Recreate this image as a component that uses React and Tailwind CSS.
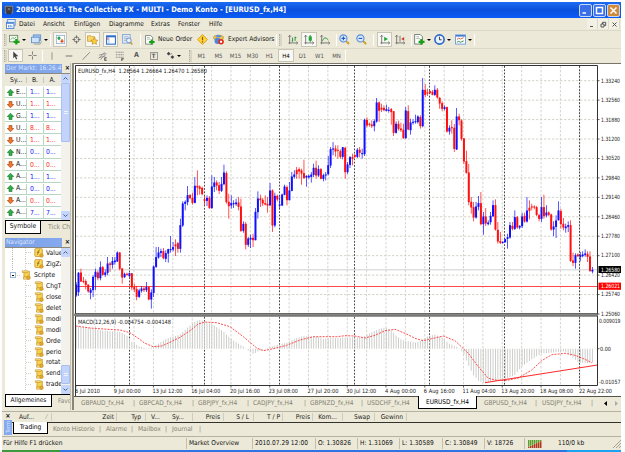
import React from "react";

/* ---------- price data: [high, low, open, close] in thirds of a pixel, y down ---------- */
const CANDLES = [
  [660,705,700,668],[630,702,690,633],[620,660,632,658],[645,664,657,659],[652,682,658,668],[668,692,668,688],[678,712,692,684],[640,705,684,645],
  [620,684,645,630],[625,655,632,648],[598,655,648,616],[612,642,616,638],[622,645,638,632],[585,640,632,605],[600,630,605,608],[585,620,608,598],
  [585,608,600,596],[568,600,598,572],[570,625,572,620],[618,665,620,646],[632,648,645,636],[632,642,636,638],[632,645,642,634],[634,685,634,676],
  [665,690,676,682],[672,715,682,704],[680,708,704,686],[672,692,686,680],[675,690,680,684],[660,690,684,676],[674,715,676,712],[682,740,712,692],
  [610,705,692,614],[555,618,614,586],[555,590,586,572],[560,585,572,568],[558,592,568,588],[565,600,590,574],[560,602,574,562],[522,572,564,562],
  [540,568,562,556],[532,582,548,552],[540,572,544,560],[470,572,560,490],[418,495,490,425],[415,445,425,420],[372,430,420,400],[396,412,400,408],
  [392,428,408,422],[345,424,422,372],[325,400,372,376],[370,398,374,380],[374,400,378,396],[402,430,412,416],[400,432,416,408],[402,440,408,438],
  [340,440,438,374],[345,390,374,362],[355,385,362,370],[360,396,370,386],[345,390,386,366],[308,370,366,332],[328,425,334,420],[395,470,420,432],
  [400,440,430,424],[415,438,426,424],[410,432,426,422],[405,445,422,434],[410,510,434,506],[478,512,506,486],[480,562,486,548],[525,555,548,530],
  [518,558,532,528],[515,555,528,534],[438,535,534,450],[388,470,450,410],[398,435,410,414],[408,432,414,424],[400,430,424,427],[405,452,426,430],
  [363,430,430,386],[382,510,386,490],[392,496,490,402],[398,418,402,412],[400,440,430,428],[395,432,430,398],[368,400,398,374],[370,430,376,414],
  [360,415,414,386],[330,388,386,344],[325,350,344,338],[315,350,324,336],[316,350,322,328],[320,368,326,334],[293,350,334,348],[340,374,346,342],
  [338,350,346,342],[330,362,344,338],[305,345,338,318],[296,350,318,340],[310,345,340,322],[318,352,322,350],[335,358,350,340],[330,355,340,338],
  [282,340,336,310],[255,318,310,262],[240,280,262,260],[250,284,260,268],[250,290,264,266],[262,290,268,284],[255,292,284,256],[254,350,258,330],
  [300,336,330,308],[282,318,308,286],[275,310,286,290],[276,288,280,284],[258,288,284,264],[255,286,264,272],[260,290,276,274],[170,282,276,174],
  [166,196,174,190],[182,194,186,188],[175,198,188,192],[172,208,192,178],[108,182,178,122],[118,180,122,146],[125,150,138,142],[130,148,138,144],
  [128,148,146,142],[135,152,145,144],[138,188,142,150],[148,222,148,212],[178,215,212,186],[176,206,186,200],[182,210,200,204],[185,230,204,228],
  [135,230,228,146],[130,205,148,202],[170,218,204,182],[172,188,182,180],[158,185,180,178],[160,185,180,164],[160,200,166,192],[48,196,192,84],
  [66,106,84,98],[80,102,92,94],[85,95,88,92],[84,100,90,98],[70,102,98,84],[78,110,84,106],[105,140,108,124],[118,148,124,140],
  [130,145,140,136],[134,212,136,208],[190,218,208,198],[175,215,196,198],[186,270,198,260],[138,264,262,164],[155,190,164,174],[172,236,176,230],
  [228,306,230,298],[266,335,298,332],[306,430,332,420],[405,455,420,436],[420,478,436,466],[420,470,466,434],[402,445,434,424],[390,490,424,486],
  [450,518,486,464],[438,492,464,484],[475,490,486,482],[450,488,480,462],[415,465,462,430],[412,506,430,502],[480,545,504,538],[510,546,538,542],
  [538,545,542,540],[530,542,540,532],[515,560,530,526],[480,530,526,490],[480,505,492,500],[445,504,500,466],[462,500,466,496],[490,502,496,492],
  [452,498,492,464],[452,482,462,478],[405,482,478,446],[415,472,438,446],[425,445,434,436],[430,442,434,436],[432,462,436,458],[455,478,460,470],
  [405,480,470,436],[398,470,436,462],[430,466,460,452],[448,462,452,458],[455,506,458,502],[478,522,502,494],[460,528,494,476],[418,476,474,446],
  [440,500,448,486],[468,505,486,496],[485,512,498,494],[478,510,494,490],[475,600,490,596],[572,612,596,602],[574,620,602,580],[574,585,578,582],
  [570,598,584,580],[568,586,582,578],[562,584,578,575],[568,600,576,584],[568,630,584,626],[615,634,628,624],
];

/* MACD curves, same unit */
const HIST = [[17,48],[60,54],[100,62],[150,66],[170,76],[185,95],[205,108],[230,115],[250,112],[270,98],[290,86],[310,80],[330,74],[350,55],[370,38],[385,30],[400,32],[430,45],[460,64],[480,84],[500,98],[520,110],[530,118],[550,132],[565,124],[580,118],[600,112],[620,105],[650,98],[680,84],[700,78],[740,80],[760,86],[800,84],[825,82],[875,82],[895,72],[920,60],[945,52],[965,62],[980,78],[995,90],[1015,94],[1040,98],[1055,90],[1075,78],[1095,74],[1120,84],[1135,100],[1155,108],[1170,116],[1180,130],[1195,165],[1210,195],[1225,212],[1245,220],[1265,215],[1305,208],[1335,195],[1355,170],[1385,148],[1415,130],[1445,128],[1485,124],[1505,140],[1525,156],[1545,160],[1570,158]];
const SIGNAL = [[17,48],[60,54],[100,57],[150,60],[180,68],[200,82],[225,100],[250,110],[275,108],[300,97],[330,82],[360,62],[385,42],[405,36],[440,38],[480,50],[520,80],[560,114],[580,122],[610,116],[650,106],[690,90],[730,80],[800,80],[825,77],[855,78],[885,84],[915,76],[945,62],[975,58],[1005,70],[1035,85],[1060,92],[1085,86],[1120,78],[1155,92],[1195,130],[1225,170],[1255,205],[1275,210],[1305,212],[1345,204],[1385,180],[1415,152],[1445,134],[1485,130],[1515,136],[1545,148],[1565,158]];

const heightAt = (x) => {
  for (let i = 1; i < HIST.length; i++) {
    if (x <= HIST[i][0]) {
      const [x0, y0] = HIST[i - 1];
      const [x1, y1] = HIST[i];
      return y0 + ((y1 - y0) * (x - x0)) / (x1 - x0);
    }
  }
  return 158;
};

const PRICES = ["1.33240","1.32560","1.31880","1.31200","1.30520","1.29840","1.29140","1.28460","1.27780","1.27100","1.26420","1.25740","1.25060"];
const DATES = ["6 Jul 2010","9 Jul 00:00","13 Jul 12:00","16 Jul 04:00","20 Jul 16:00","23 Jul 08:00","27 Jul 20:00","30 Jul 12:00","4 Aug 00:00","6 Aug 16:00","11 Aug 04:00","13 Aug 20:00","18 Aug 08:00","22 Aug 22:00"];
const DATE_W = [25, 27, 30, 29, 30, 29, 31, 30, 31, 31, 33, 33, 33, 33];

function Chart() {
  const grid = Array.from({ length: 26 }, (_, i) => 95.3 + i * 19.38);
  const weeks = [129.5, 204.5, 279.5, 354.5, 429.5, 504.5, 579.5];
  return (
    <svg viewBox="74 64 547 332" className="block h-[332px] w-[547px]" fontFamily="'DejaVu Sans Condensed','DejaVu Sans',sans-serif" fontSize="5.8" fill="#1a1a1a">
      <rect x="74" y="64" width="547" height="332" fill="#fff" />
      <g stroke="#cfcfc4" strokeWidth="0.9" strokeDasharray="2.4 1.6">
        {PRICES.map((p, i) => <path key={p} d={`M76 ${80.7 + i * 19.44}H597`} />)}
        {grid.map((x) => <path key={x} d={`M${x} 66V385`} />)}
      </g>
      <path d="M76 269.8H597" stroke="#c4c4c4" strokeWidth="0.8" />
      {weeks.map((x) => <path key={x} d={`M${x} 66V385`} stroke="#333" strokeWidth="0.9" strokeDasharray="1.8 1.5" />)}
      <path d="M76 286.5H598" stroke="#ff4848" strokeWidth="1" />
      {CANDLES.map(([h, l, o, c], i) => {
        const x = 76.1 + i * 2.424;
        const color = c < o ? "#1010ff" : "#ff1010";
        return (
          <g key={i} fill={color}>
            <rect x={x - 0.35} y={62 + h / 3} width="0.7" height={(l - h) / 3} />
            <rect x={x - 1} y={62 + Math.min(o, c) / 3 - 0.2} width="2" height={Math.max(1, Math.abs(c - o) / 3 + 0.4)} />
          </g>
        );
      })}
      <g fill="#c8c8c6">
        {CANDLES.map((_, i) => {
          const x = 76.1 + i * 2.424;
          const y = 310 + heightAt((x - 70) * 3) / 3;
          return <rect key={i} x={x - 0.45} y={Math.min(y, 348.7)} width="0.9" height={Math.max(0.4, Math.abs(348.7 - y))} />;
        })}
      </g>
      <path d={"M" + SIGNAL.map(([x, y]) => `${(70 + x / 3).toFixed(1)} ${(310 + y / 3).toFixed(1)}`).join("L")} fill="none" stroke="#ff3a3a" strokeWidth="0.9" strokeDasharray="2 1.2" />
      <path d="M485 382.7L597.5 365" stroke="#ff2828" strokeWidth="1" />
      {/* frames */}
      <path d="M75.5 396V65.5H597.5V385.5H75.5" fill="none" stroke="#333" strokeWidth="1" />
      <rect x="74" y="313.6" width="524" height="2.4" fill="#8a8a86" />
      <path d="M75 313.6H597.5M75 316.2H597.5" stroke="#444" strokeWidth="0.8" />
      <text x="78" y="73.3" textLength="129" lengthAdjust="spacingAndGlyphs">EURUSD_fx,H4&#160; 1.26564 1.26664 1.26470 1.26580</text>
      <text x="78" y="324.2" textLength="93" lengthAdjust="spacingAndGlyphs">MACD(12,26,9) -0.004754 -0.004148</text>
      {PRICES.map((p, i) => (
        <g key={p}>
          <path d={`M597 ${80.7 + i * 19.44}h2.5`} stroke="#333" strokeWidth="0.8" />
          <text x="601" y={82.7 + i * 19.4} textLength="19" lengthAdjust="spacingAndGlyphs">{p}</text>
        </g>
      ))}
      <path d="M597 348.7h2.5" stroke="#333" strokeWidth="0.8" />
      <text x="599" y="322.8" textLength="21.5" lengthAdjust="spacingAndGlyphs">0.009019</text>
      <text x="600" y="350.8" textLength="11" lengthAdjust="spacingAndGlyphs">0.00</text>
      <text x="599" y="383.8" textLength="21.5" lengthAdjust="spacingAndGlyphs">-0.01057</text>
      <rect x="598.5" y="266" width="22.5" height="7" fill="#000" />
      <text x="601" y="271.7" fill="#fff" textLength="19" lengthAdjust="spacingAndGlyphs">1.26580</text>
      <rect x="598.5" y="282.6" width="22.5" height="7.2" fill="#ff0000" />
      <text x="601" y="288.4" fill="#fff" textLength="19" lengthAdjust="spacingAndGlyphs">1.26021</text>
      {DATES.map((d, i) => (
        <g key={d}>
          <path d={`M${75.9 + i * 38.76} 385v2.5`} stroke="#333" strokeWidth="0.8" />
          <text x={75 + i * 38.76} y="393.3" textLength={DATE_W[i]} lengthAdjust="spacingAndGlyphs">{d}</text>
        </g>
      ))}
    </svg>
  );
}

/* ---------- icons ---------- */
const ICONS = {
  app: <><rect x="1" y="1" width="10" height="9" rx="1" fill="#8b8a86" /><path d="M2 2h8v6l-2 3H4L2 8z" fill="#3c3c40" /><path d="M4.500 3.500l3 3M7.500 3.500l-3 3" stroke="#999" strokeWidth="0.800" /></>,
  charts: <><rect x="2" y="0.500" width="9" height="7" fill="#e8f1ff" stroke="#4b86d8" /><rect x="0.500" y="4" width="9" height="7.500" fill="#fff" stroke="#3b78d0" /><path d="M1 5h8" stroke="#3b78d0" strokeWidth="1.400" /><path d="M3 10V7.500M5 10V7M7 10V8" stroke="#3b78d0" /></>,
  newChart: <><rect x="0.500" y="1.500" width="9" height="7" fill="#f4f8ee" stroke="#6f8f6f" /><path d="M2 6l2-2 2 1 2-2" fill="none" stroke="#6aa96a" /><path d="M8 5.500v6M5 8.500h6.500" stroke="#18a018" strokeWidth="2.400" /></>,
  profiles: <><rect x="2.500" y="1" width="8" height="6" fill="#9cc4f4" stroke="#6a94cc" /><rect x="0.500" y="3.500" width="8.500" height="6" fill="#cfe2fb" stroke="#6a94cc" /><path d="M3 11h7l1.500-3" fill="none" stroke="#9a9a8a" /></>,
  market: <><rect x="0.500" y="0.500" width="11" height="11" fill="#fff" stroke="#8cacd4" /><path d="M4 1.500l3 3.200h-6z M3 4.500h2v2H3z" fill="#1a9a3a" /><path d="M8 10.700L5 7.500h6z M7 5.500h2v2H7z" fill="#e04a20" /></>,
  cross: <><circle cx="6" cy="6" r="3.500" fill="none" stroke="#555" /><path d="M6 0.500v4M6 7.500v4M0.500 6h4M7.500 6h4" stroke="#555" /></>,
  folder: <><path d="M0.500 2h4l1 1h3v5h-8z" fill="#f9d768" stroke="#c8962a" strokeWidth="0.800" /><path d="M8 4l1.200 2.500 2.600.3-2 1.800.6 2.700L8 10l-2.400 1.300.6-2.700-2-1.800 2.600-.3z" fill="#ffd23a" stroke="#b8841a" strokeWidth="0.700" /></>,
  terminal: <><rect x="0.700" y="1" width="10.600" height="10" fill="#fff" stroke="#2f6fc8" strokeWidth="1.300" /><path d="M1 2h10" stroke="#2f6fc8" strokeWidth="1.600" /><path d="M3.500 3v8" stroke="#8fb2e4" /><path d="M2.200 3v3" stroke="#e05030" /></>,
  tester: <><rect x="0.500" y="0.500" width="8.500" height="9.500" fill="#dfe9f6" stroke="#8cacd4" /><path d="M2 3h5M2 5h5M2 7h5" stroke="#8aa6cc" strokeWidth="0.700" /><circle cx="7.500" cy="7" r="2.600" fill="#e7f3ff" stroke="#6a8cbe" /><path d="M9.300 9l2 2.500" stroke="#c89a3a" strokeWidth="1.600" /></>,
  order: <><path d="M0.700 0.500h6l2.500 2.500v8H0.700z" fill="#fff" stroke="#6a7a6a" /><path d="M2.500 3h3M2.500 5h4" stroke="#888" strokeWidth="0.700" /><path d="M8 5.500v6M5 8.500h6.500" stroke="#18a018" strokeWidth="2.400" /></>,
  diamond: <><path d="M6 0.500L11.500 6 6 11.500 0.500 6z" fill="#ffd23a" stroke="#d8a01e" /><path d="M6 3v3.800M6 8v1.300" stroke="#8a5a08" strokeWidth="1.300" /></>,
  expert: <><ellipse cx="6" cy="4" rx="5.500" ry="2.600" fill="#f2c648" stroke="#b8841a" strokeWidth="0.700" /><circle cx="5" cy="7.500" r="3.300" fill="#4b86d8" /><path d="M3 3.500C3 0 8.500 0 9 3.500z" fill="#5b93e0" /><circle cx="8.800" cy="8.500" r="3" fill="#e02a18" /><rect x="7.700" y="7.400" width="2.200" height="2.200" fill="#fff" /></>,
  bars: <><path d="M2 0.500v10.500M0.500 9.500h11M0.500 2l1.500-1.700L3.500 2M10 8l1.700 1.500L10 11" fill="none" stroke="#666" /><path d="M5.500 3v5M4.500 7h1M8.500 2v5M8.500 3h1.500" stroke="#188a28" strokeWidth="1.100" /></>,
  candle: <><path d="M2 0.500v10.500M0.500 9.500h11M0.500 2l1.500-1.700L3.500 2M10 8l1.700 1.500L10 11" fill="none" stroke="#666" /><path d="M7.500 0v8.500" stroke="#188a28" /><rect x="5.600" y="1.500" width="3.800" height="5.500" rx="0.800" fill="#1ea83a" /></>,
  line: <><path d="M2 0.500v10.500M0.500 9.500h11M0.500 2l1.500-1.700L3.500 2M10 8l1.700 1.500L10 11" fill="none" stroke="#666" /><path d="M3 7c2-5 4-4 7-1" fill="none" stroke="#188a28" strokeWidth="1.100" /></>,
  zoomIn: <><path d="M7.500 7.500l3.500 3.500" stroke="#d0a02a" strokeWidth="2.200" /><circle cx="4.800" cy="4.800" r="3.900" fill="#d8eaff" stroke="#5a8cd8" strokeWidth="1.200" /><path d="M2.800 4.800h4M4.800 2.800v4" stroke="#2458b8" strokeWidth="1.200" /></>,
  zoomOut: <><path d="M7.500 7.500l3.500 3.500" stroke="#d0a02a" strokeWidth="2.200" /><circle cx="4.800" cy="4.800" r="3.900" fill="#d8eaff" stroke="#5a8cd8" strokeWidth="1.200" /><path d="M2.800 4.800h4" stroke="#2458b8" strokeWidth="1.200" /></>,
  scroll: <><path d="M2 0.500v10.500M0.500 9.500h11M0.500 2l1.500-1.700L3.500 2M10 8l1.700 1.500L10 11" fill="none" stroke="#666" /><path d="M5 2l4.500 2.700L5 7.500z" fill="#1ea83a" /></>,
  shift: <><path d="M2 0.500v10.500M0.500 9.500h11M0.500 2l1.500-1.700L3.500 2M10 8l1.700 1.500L10 11M6 1v7" fill="none" stroke="#666" /><path d="M11 2.500L7.500 4.700 11 7z" fill="#c83a28" /></>,
  clock: <><circle cx="6" cy="6" r="5" fill="#e9f3ff" stroke="#2f68c8" strokeWidth="1.800" /><path d="M6 3v3.300h2.300" fill="none" stroke="#333" /></>,
  template: <><rect x="0.600" y="1" width="10.800" height="10" fill="#fff" stroke="#6a9ae0" /><path d="M1 2h10" stroke="#3b78d0" strokeWidth="1.700" /><path d="M2 6l2-1.500 2 1 3.500-1.500" fill="none" stroke="#d05a3a" /><path d="M2 9l2-1 2 1 3.500-1.500" fill="none" stroke="#2f8a3f" /></>,
  cursor: <path d="M3 0.500v9l2.200-2 1.500 3.700 1.600-.7-1.500-3.500h3z" fill="#444" />,
  plus: <path d="M6 0.500v4.500M6 7v4.500M0.500 6H5M7 6h4.500" stroke="#666" />,
  vline: <path d="M6 1.500v9" stroke="#888" />,
  hline: <path d="M2 6h8" stroke="#777" strokeWidth="1.200" />,
  slope: <path d="M2 10.500L10.500 1.500" stroke="#777" />,
  channel: <><path d="M1 9L8 1.500M3 10.500l7-8M1 5l8-2M1 8l8-2" stroke="#777" strokeWidth="0.800" /><path d="M8 8v3.500h2.500M8 9.700h2M8 8h2.500" fill="none" stroke="#333" strokeWidth="0.800" /></>,
  fibo: <><path d="M1 1.500h9.500M1 4.500h9.500M1 7.500h9.500" stroke="#777" strokeDasharray="1.400 .6" /><path d="M8 9v3M8 9h2.500M8 10.500h2" stroke="#333" strokeWidth="0.800" /></>,
  arrows: <><path d="M1 3.500L3.500 1 6 3.500 3.500 6z M6 8L8.500 5.500 11 8 8.500 10.500z" fill="#444" /><path d="M6 5l2-2" stroke="#666" /></>,
  page: <><path d="M3.500 1.500h6.500v7H3.500z" fill="#f8d24a" stroke="#c8962e" strokeWidth="0.900" /><path d="M1.500 1h6c1.500 0 1.500 2 0 2h-6zM3 8.500h6c1.500 0 1.500 2.500 0 2.500H3z" fill="#fbe38a" stroke="#c8962e" strokeWidth="0.800" /><circle cx="9" cy="9.300" r="2.200" fill="#e5a92a" stroke="#b8861e" strokeWidth="0.600" /></>,
  indicator: <><rect x="1" y="0.800" width="9" height="9.500" rx="1" fill="#fbd75a" stroke="#c8962e" /><path d="M7 2.500C4.500 2 5.500 7 3.500 8.500M3.500 5h3" fill="none" stroke="#8a6210" /><circle cx="9" cy="9" r="2.200" fill="#e5a92a" stroke="#b8861e" strokeWidth="0.600" /></>,
};

function Icon({ name, s = 11 }) {
  return <svg viewBox="0 0 12 12" width={s} height={s} fill="none" className="shrink-0">{ICONS[name]}</svg>;
}

/* A row of fixed-width slots: [width, content, extra classes] */
function Slots({ items }) {
  return items.map(([w, content, cls = ""], i) => (
    <div key={i} className={`flex shrink-0 items-center whitespace-nowrap ${cls}`} style={{ width: w }}>{content}</div>
  ));
}

const Caret = () => <div className="ml-0.5 h-0 w-0 border-x-[2px] border-t-[2px] border-x-transparent border-t-black" />;
const Sep = () => <div className="h-3 w-px border-r border-white bg-[#b5b2a2]" />;
const Grip = () => <div className="h-3 w-[3px] border-l border-dotted border-[#b3b0a0] bg-[#d9d6c7]" />;
const PRESSED = "h-[15px] justify-center border border-[#c9c6b6] bg-[#f8f7f2]";
const C = "justify-center";

function Scrollbar({ thumb }) {
  return (
    <div className="flex w-[9px] shrink-0 flex-col bg-[#f3f2ec]">
      <div className="flex h-[9px] items-center justify-center rounded-[1px] bg-[#c6d5fb]"><svg width="5" height="3" viewBox="0 0 5 3"><path d="M.5 2.500l2-2 2 2" fill="none" stroke="#4d6185" /></svg></div>
      {thumb}
      <div className="flex h-[9px] items-center justify-center rounded-[1px] bg-[#c6d5fb]"><svg width="5" height="3" viewBox="0 0 5 3"><path d="M.5 .5l2 2 2-2" fill="none" stroke="#4d6185" /></svg></div>
    </div>
  );
}

const SYMBOLS = [["E...", "1...", 1], ["U...", "1...", 0], ["G...", "1...", 1], ["U...", "8...", 0], ["U...", "1...", 0], ["N...", "0...", 1], ["A...", "0...", 0], ["A...", "1...", 1], ["A...", "0...", 1], ["A...", "0...", 0], ["A...", "7...", 1]];

function Arrow({ up }) {
  return (
    <svg width="7" height="7" viewBox="0 0 8 8" className={up ? "shrink-0" : "shrink-0 rotate-180"}>
      <path d="M4 .3L7.700 4H5.700v3.500H2.300V4H.3z" fill={up ? "#2fae4a" : "#f07a2a"} stroke={up ? "#13702a" : "#a03a10"} strokeWidth="0.700" />
    </svg>
  );
}

function PanelTitle({ children }) {
  return (
    <div className="flex h-[10px] shrink-0 items-center">
      <div className="h-[9px] w-[57px] overflow-hidden bg-gradient-to-r from-[#7ba0e8] to-[#84a9ee] pl-px text-[6.5px] leading-[9px] whitespace-nowrap text-[#d9e5fb]">{children}</div>
      <div className="ml-[3px] text-[7px] leading-none font-bold">×</div>
    </div>
  );
}

function MarketWatch() {
  return (
    <div className="flex h-[171px] flex-col">
      <PanelTitle>Der Markt: 16:26:4</PanelTitle>
      <div className="flex h-[147px] overflow-hidden border-t border-[#8d8a7c] bg-white">
        <div className="w-[56px] text-[6.8px]">
          <div className="flex h-[12px] items-center bg-[#ebe9dc] text-[#222]">
            <div className="w-[22px] border-r border-[#c9c6b6] pl-[5px]">Sy...</div>
            <div className="w-[17px] border-r border-[#c9c6b6] text-center">B.</div>
            <div className="w-[17px] text-center">A.</div>
          </div>
          {SYMBOLS.map(([n, v, up], i) => (
            <div key={i} className="flex h-[12.1px] border-b border-[#b9d8c4] pt-px leading-[11px]">
              <div className="flex w-[22px] items-center border-r border-[#b9d8c4] pl-[2px]"><Arrow up={up} /><span className="ml-[2px]">{n}</span></div>
              <div className={`w-[17px] border-r border-[#b9d8c4] pl-[3px] ${up ? "text-[#2020ff]" : "text-[#ff3020]"}`}>{v}</div>
              <div className={`w-[17px] pl-[2px] ${up ? "text-[#2020ff]" : "text-[#ff3020]"}`}>{v}</div>
            </div>
          ))}
        </div>
        <Scrollbar thumb={<div className="flex-1"><div className="flex h-[59px] flex-col items-center justify-center gap-px rounded-[1px] border border-[#a9bff0] bg-[#c3d3fb]"><div className="h-px w-1 bg-[#eef3ff]" /><div className="h-px w-1 bg-[#eef3ff]" /></div></div>} />
      </div>
      <div className="flex h-[14px] items-start overflow-hidden whitespace-nowrap border-t border-black text-[6.8px]">
        <div className="h-[13px] w-[36px] border-x border-b border-black bg-white text-center leading-[11px]">Symbole</div>
        <div className="h-[13px] flex-1 overflow-hidden pl-[7px] leading-[12px] text-[#8b8879]">Tick Cha</div>
      </div>
    </div>
  );
}

const TREE = [["indicator", "Value"], ["indicator", "ZigZa"], null, ["page", "ChgT"], ["page", "close"], ["page", "delet"], ["page", "modi"], ["page", "modi"], ["page", "Orde"], ["page", "perio"], ["page", "rotat"], ["page", "send"], ["page", "trade"]];

function Navigator() {
  return (
    <div className="mt-[3px] flex h-[171px] flex-col">
      <PanelTitle>Navigator</PanelTitle>
      <div className="flex h-[147px] border-t border-[#8d8a7c] bg-white">
        <div className="w-[56px] overflow-hidden text-[6.7px] leading-none whitespace-nowrap">
          {TREE.map((t, i) =>
            t ? (
              <div key={i} className="flex h-[10.950px] items-center">
                <div className={`ml-[7px] h-full w-[13px] shrink-0 ${i < 2 ? "border-l border-dotted border-[#b5b5a8]" : ""}`} />
                <div className="mr-[3px] h-full w-[6px] shrink-0 border-l border-dotted border-[#d0d0c4]"><div className="h-1/2 border-b border-dotted border-[#d0d0c4]" /></div>
                <Icon name={t[0]} s={10} />
                <span className="ml-[2px]">{t[1]}</span>
              </div>
            ) : (
              <div key={i} className="flex h-[10.950px] items-center">
                <div className="ml-[5px] flex size-[6px] shrink-0 items-center justify-center border border-[#9fb5d4] bg-white"><div className="h-px w-[2px] bg-black" /></div>
                <div className="mr-px ml-px w-[3px] border-b border-dotted border-[#d0d0c4]" />
                <Icon name="page" s={10} />
                <span className="ml-[3px]">Scripte</span>
              </div>
            )
          )}
        </div>
        <Scrollbar thumb={<div className="flex flex-1 flex-col justify-end"><div className="mb-px flex h-[19px] flex-col items-center justify-center gap-px rounded-[1px] border border-[#a9bff0] bg-[#c3d3fb]"><div className="h-px w-1 bg-[#eef3ff]" /><div className="h-px w-1 bg-[#eef3ff]" /></div></div>} />
      </div>
      <div className="flex h-[14px] items-start overflow-hidden whitespace-nowrap border-t border-black text-[6.5px]">
        <div className="h-[12px] w-[47px] border-x border-b border-black bg-white text-center leading-[11px]">Allgemeines</div>
        <div className="h-[13px] flex-1 overflow-hidden pl-[6px] leading-[12px] text-[#8b8879]">Favor</div>
      </div>
    </div>
  );
}

const Btn = ({ children, red }) => (
  <div className={`flex size-[13px] items-center justify-center rounded-[2px] border border-[#c8d8fa] text-white ${red ? "bg-[#d08a3c]" : "bg-[#3a6fe6]"}`}>
    <svg width="9" height="9" viewBox="0 0 9 9" fill="none" stroke="#fff" strokeWidth="1.500">{children}</svg>
  </div>
);

export default function App() {
  return (
    <div className="flex h-[452px] w-[625px] flex-col overflow-hidden bg-white pt-[2px] pl-[2px] font-['DejaVu_Sans_Condensed','DejaVu_Sans',sans-serif] text-[6.6px] leading-none text-[#111]">
      <div className="flex h-[450px] w-[619px] flex-col bg-[#ece9d8]">
        {/* title bar */}
        <div className="flex h-4 shrink-0 items-center bg-gradient-to-b from-[#1c6cf2] via-[#0a50dc] to-[#0a5cf8] pl-[2px]">
          <Icon name="app" s={10} />
          <div className="ml-[2px] w-[271px] text-[7.5px] font-bold whitespace-nowrap text-white">2089001156: The Collective FX - MULTI - Demo Konto - [EURUSD_fx,H4]</div>
          <div className="mr-[1px] ml-auto flex gap-px">
            <Btn><path d="M1.500 7h3.500" /></Btn>
            <Btn><path d="M1.500 1.500h6v6h-6z" /></Btn>
            <Btn red><path d="M1.500 1.500l6 6M7.500 1.500l-6 6" /></Btn>
          </div>
        </div>
        {/* menu */}
        <div className="flex h-[13px] shrink-0 items-center border-b border-[#dcd9c8] text-[6.6px]">
          <Slots items={[[17, <Icon name="charts" s={10} />, "pl-[4px]"], [24, "Datei"], [31, "Ansicht"], [35, "Einfügen"], [42, "Diagramme"], [27, "Extras"], [31, "Fenster"], [30, "Hilfe"]]} />
          <div className="mr-px ml-auto flex">
            {["M1 5.500h3", "M1 3h3v3H1zM2.500 3V1.300h3.200V4.500H4.200", "M1.500 1.500l4 4M5.500 1.500l-4 4"].map((d) => (
              <div key={d} className="flex h-[10px] w-[11px] items-center justify-center border-r border-[#dcd9c8] bg-[#f3f1e6]"><svg width="7" height="7" viewBox="0 0 7 7" fill="none" stroke="#555"><path d={d} /></svg></div>
            ))}
          </div>
        </div>
        {/* main toolbar */}
        <div className="flex h-[17px] shrink-0 items-center">
          <Slots items={[
            [7, <Grip />, "pl-[2px]"], [22, <><Icon name="newChart" /><Caret /></>], [17, <><Icon name="profiles" /><Caret /></>], [5, <Sep />, "pl-[2px]"],
            [14, <Icon name="market" s={9} />, PRESSED], [18, <Icon name="cross" s={9} />, C], [15, <Icon name="folder" />, PRESSED], [3, null], [15, <Icon name="terminal" s={10} />, PRESSED], [19, <Icon name="tester" />, C],
            [8, <Sep />, "pl-[3px]"], [52, <><Icon name="order" s={10} /><span className="ml-[3px]">Neue Order</span></>], [16, <Icon name="diamond" />], [63, <><Icon name="expert" /><span className="ml-[4px]">Expert Advisors</span></>],
            [1, <Sep />], [8, <Grip />, "pl-[2px]"], [16, <Icon name="bars" s={10} />, C], [16, <Icon name="candle" s={10} />, PRESSED], [16, <Icon name="line" s={10} />, C], [6, <Sep />, "pl-[3px]"],
            [17, <Icon name="zoomIn" />], [17, <Icon name="zoomOut" />], [4, <Sep />], [15, <Icon name="scroll" s={10} />, PRESSED], [16, <Icon name="shift" s={10} />, C], [6, <Sep />, "pl-[3px]"],
            [20, <><Icon name="order" /><Caret /></>], [21, <><Icon name="clock" /><Caret /></>], [19, <><Icon name="template" /><Caret /></>], [3, <Sep />],
          ]} />
        </div>
        {/* drawing toolbar */}
        <div className="flex h-[14px] shrink-0 items-center border-t border-[#dcd9c8] text-[6px] text-[#555]">
          <Slots items={[
            [6, <Grip />, "pl-[2px]"], [15, <Icon name="cursor" s={9} />, "h-[13px] justify-center border border-[#c9c6b6] bg-[#f8f7f2]"], [19, <Icon name="plus" s={9} />, C], [1, <Sep />],
            ...["vline", "hline", "slope", "channel", "fibo"].map((n) => [17, <Icon name={n} s={10} />, C]),
            [17, <span className="text-[7px] font-bold">A</span>, C], [17, <span className="flex size-[8px] items-center justify-center border border-[#999] text-[6px] font-bold">T</span>, C], [22, <><Icon name="arrows" s={9} /><Caret /></>, C],
            [9, <Grip />, "pl-[5px]"],
            ...["M1", "M5", "M15", "M30", "H1"].map((t) => [17, t, C]),
            [16, "H4", "h-[13px] justify-center border border-[#c9c6b6] bg-[#f8f7f2] text-black"],
            ...["D1", "W1", "MN"].map((t) => [17, t, C]), [3, <Sep />],
          ]} />
        </div>
        {/* work area */}
        <div className="flex h-[348px] shrink-0 pt-px">
          <div className="mr-px w-[69px] shrink-0 border-r border-[#c4c1b1] pl-[3px]">
            <MarketWatch />
            <Navigator />
          </div>
          <div className="flex min-w-0 flex-1 flex-col border-l-2 border-[#8a877a]">
            <div className="h-px w-full shrink-0 bg-[#77756a]" />
            <div className="h-[332px] shrink-0 overflow-hidden"><Chart /></div>
            <div className="flex h-[13px] items-stretch border-t border-[#55534a] text-[6.5px] text-[#858274]">
              <Slots items={[[7, null], [58, "GBPAUD_fx,H4"], [59, "GBPCAD_fx,H4"], [55, "GBPJPY_fx,H4"], [57, "CADJPY_fx,H4"], [57, "GBPNZD_fx,H4"], [51, "USDCHF_fx,H4"]].map(([w, t]) => [w, t && <><span>{t}</span>{t[0] !== "U" && <span className="mr-[4px] ml-auto">|</span>}</>])} />
              <div className="-mt-px flex w-[59px] items-center justify-center border-x border-b border-black bg-white text-black">EURUSD_fx,H4</div>
              <Slots items={[[7, null], [58, "GBPUSD_fx,H4"], [56, "USDJPY_fx,H4"]].map(([w, t]) => [w, t && <><span>{t}</span><span className="mr-[5px] ml-auto">|</span></>])} />
              <div className="flex flex-1 items-center justify-end gap-[8px] pr-[3px]"><svg width="3" height="5"><path d="M3 0v5L0 2.500z" fill="#000" /></svg><svg width="3" height="5"><path d="M0 0v5l3-2.500z" fill="#aaa" /></svg></div>
            </div>
          </div>
        </div>
        {/* terminal */}
        <div className="mt-[1px] flex h-[24px] shrink-0 border-t border-[#b5b2a2]">
          <div className="ml-[2px] flex w-[8px] flex-col items-center">
            <div className="flex h-[8px] items-center text-[7px] font-bold">×</div>
            <div className="flex h-[15px] w-full items-center justify-center overflow-hidden bg-[#84a9ee] text-[#d9e5fb]"><span className="rotate-180 text-[5.6px] leading-[7px] [writing-mode:vertical-rl]">Term</span></div>
          </div>
          <div className="flex flex-1 flex-col">
            <div className="flex h-[11px] items-center border-b border-[#33322c] text-[#222]">
              <Slots items={[[7, null], [27, "Auf..."], [5, "⁄", "text-[#999]"], [66, "Zeit", "h-[8px] justify-end border-l border-r border-[#cfccbc] pr-[2px]"], [29, "Typ", "h-[8px] justify-end border-r border-[#cfccbc] pr-[4px]"], [22, "V...", "pl-[5px]"], [25, "Sy...", "h-[8px] pl-[4px] border-r border-[#cfccbc]"], [31, "Preis", "h-[8px] justify-end border-r border-[#cfccbc] pr-[3px]"], [30, "S / L", "h-[8px] justify-end border-r border-[#cfccbc] pr-[4px]"], [29, "T / P", "h-[8px] justify-end border-r border-[#cfccbc] pr-[2px]"], [30, "Preis", "h-[8px] justify-end border-r border-[#cfccbc] pr-[2px]"], [30, "Kom...", "h-[8px] justify-center border-r border-[#cfccbc]"], [32, "Swap", "h-[8px] justify-end border-r border-[#cfccbc] pr-[4px]"], [32, "Gewinn", "h-[8px] justify-end border-r border-[#cfccbc] pr-[3px]"]]} />
            </div>
            <div className="flex h-[12px] items-stretch text-[#858274]">
              <div className="-mt-px ml-px flex h-[12px] w-[35px] items-center justify-center border-x border-b border-black bg-white text-black">Trading</div>
              <Slots items={[[5, null], [53, "Konto Historie"], [32, "Alarme"], [34, "Mailbox"], [34, "Journal"]].map(([w, t]) => [w, t && <><span>{t}</span><span className="mr-[5px] ml-auto">|</span></>])} />
            </div>
          </div>
        </div>
        {/* status bar */}
        <div className="mt-px flex h-[14px] shrink-0 items-center border-t border-[#b5b2a2]">
          <Slots items={[[184, "Für Hilfe F1 drücken", "pl-[1px]"], ...[[66, "Market Overview"], [63, "2010.07.29 12:00"], [42, "O: 1.30826"], [42, "H: 1.31069"], [43, "L: 1.30589"], [42, "C: 1.30849"], [40, "V: 18726"]].map(([w, t]) => [w, t, "h-[11px] border-l border-[#c2bfae] pl-[2px]"]),
            [34, <svg width="14" height="8" viewBox="0 0 14 8">{[0, 2, 4, 6, 8, 10, 12].map((x, i) => <g key={x}><rect x={x} y="0" width="1.500" height={6.500 - i * 0.900} fill="#5aa02c" /><rect x={x} y={6.700 - i * 0.900} width="1.500" height={1.300 + i * 0.900} fill="#b03a20" /></g>)}</svg>, "h-[11px] border-l border-[#c2bfae] pl-[3px]"], [40, "110/0 kb"]]} />
          <svg className="ml-auto" width="8" height="9" viewBox="0 0 8 9"><path d="M0 9l8-8M3 9l5-5M6 9l2-2" stroke="#a5a293" /></svg>
        </div>
        {/* desktop task bar edge */}
        <div className="flex h-[2px] flex-1"><div className="w-[58px] bg-[#3c9a3c]" /><div className="flex-1 bg-[#2f74e4]" /><div className="w-[54px] bg-[#1ca4f0]" /></div>
      </div>
    </div>
  );
}
